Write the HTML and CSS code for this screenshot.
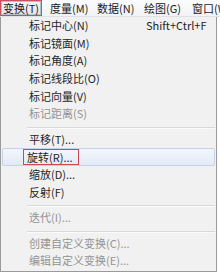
FILE: index.html
```html
<!DOCTYPE html>
<html>
<head>
<meta charset="utf-8">
<link rel="stylesheet" href="styles.css">
</head>
<body>
<div class="menubar">
  <span class="mb-item active">变换(T)</span>
  <span class="mb-item">度量(M)</span>
  <span class="mb-item">数据(N)</span>
  <span class="mb-item">绘图(G)</span>
  <span class="mb-item last">窗口(W</span>
</div>
<div class="menu">
  <div class="row"><span>标记中心(N)</span><span class="key">Shift+Ctrl+F</span></div>
  <div class="row"><span>标记镜面(M)</span></div>
  <div class="row"><span>标记角度(A)</span></div>
  <div class="row"><span>标记线段比(O)</span></div>
  <div class="row"><span>标记向量(V)</span></div>
  <div class="row disabled"><span>标记距离(S)</span></div>
  <div class="sep"></div>
  <div class="row"><span>平移(T)...</span></div>
  <div class="row hover"><span class="boxed">旋转(R)...</span></div>
  <div class="row"><span>缩放(D)...</span></div>
  <div class="row"><span>反射(F)</span></div>
  <div class="sep"></div>
  <div class="row disabled"><span>迭代(I)...</span></div>
  <div class="sep"></div>
  <div class="row disabled"><span>创建自定义变换(C)...</span></div>
  <div class="row disabled"><span>编辑自定义变换(E)...</span></div>
</div>
</body>
</html>
```

FILE: styles.css
```css
html, body {
  margin: 0;
  padding: 0;
  background: #ffffff;
}
body {
  width: 220px;
  height: 273px;
  overflow: hidden;
  font-family: "Noto Sans CJK SC", "Noto Sans", sans-serif;
  font-size: 11px;
  line-height: 1;
  color: #1f1f1f;
}
.menubar {
  display: flex;
  height: 16px;
  background: linear-gradient(#fbfcfd, #f1f3f6);
  border-bottom: 1px solid #dfe1e4;
  white-space: nowrap;
  overflow: hidden;
}
.mb-item {
  display: flex;
  align-items: center;
  flex: none;
  box-sizing: border-box;
  width: 47px;
  height: 16px;
  padding-left: 3px;
  color: #1b1b1b;
}
.mb-item.last {
  width: auto;
  padding-left: 4px;
}
.mb-item.active {
  width: 42px;
  margin-right: 5px;
  border: 1px solid #c9505c;
  padding-left: 2px;
  background: linear-gradient(#f2f3f6, #e1e5eb);
  box-shadow: inset 0 0 0 1px #b9bec6;
}
.menu {
  box-sizing: border-box;
  width: 217px;
  padding: 0 1px 1px 0;
  background: #f1f1f1;
  border: 1px solid #9a9a9a;
  border-top: none;
}
.row {
  display: grid;
  grid-template-columns: 117px auto;
  align-items: center;
  height: 17.6px;
  padding-left: 28px;
  box-sizing: border-box;
  white-space: nowrap;
}
.row.disabled {
  color: #949494;
}
.row.hover {
  margin-left: 1px;
  padding-left: 27px;
  border: 1px solid #c3d3ea;
  border-radius: 2px;
  background: linear-gradient(#f3f6fc, #e3eaf6);
}
.boxed {
  display: inline-flex;
  align-items: center;
  height: 16px;
  box-sizing: border-box;
  border: 1px solid #cf4755;
  padding: 0 5px 0 3px;
  margin-left: -7px;
  justify-self: start;
}
.key {
  color: #1f1f1f;
}
.sep {
  height: 8px;
  box-sizing: border-box;
  margin-left: 26px;
  padding-top: 4px;
}
.sep::before {
  content: "";
  display: block;
  height: 1px;
  background: #d9d9d9;
  border-bottom: 1px solid #fbfbfb;
}
```
